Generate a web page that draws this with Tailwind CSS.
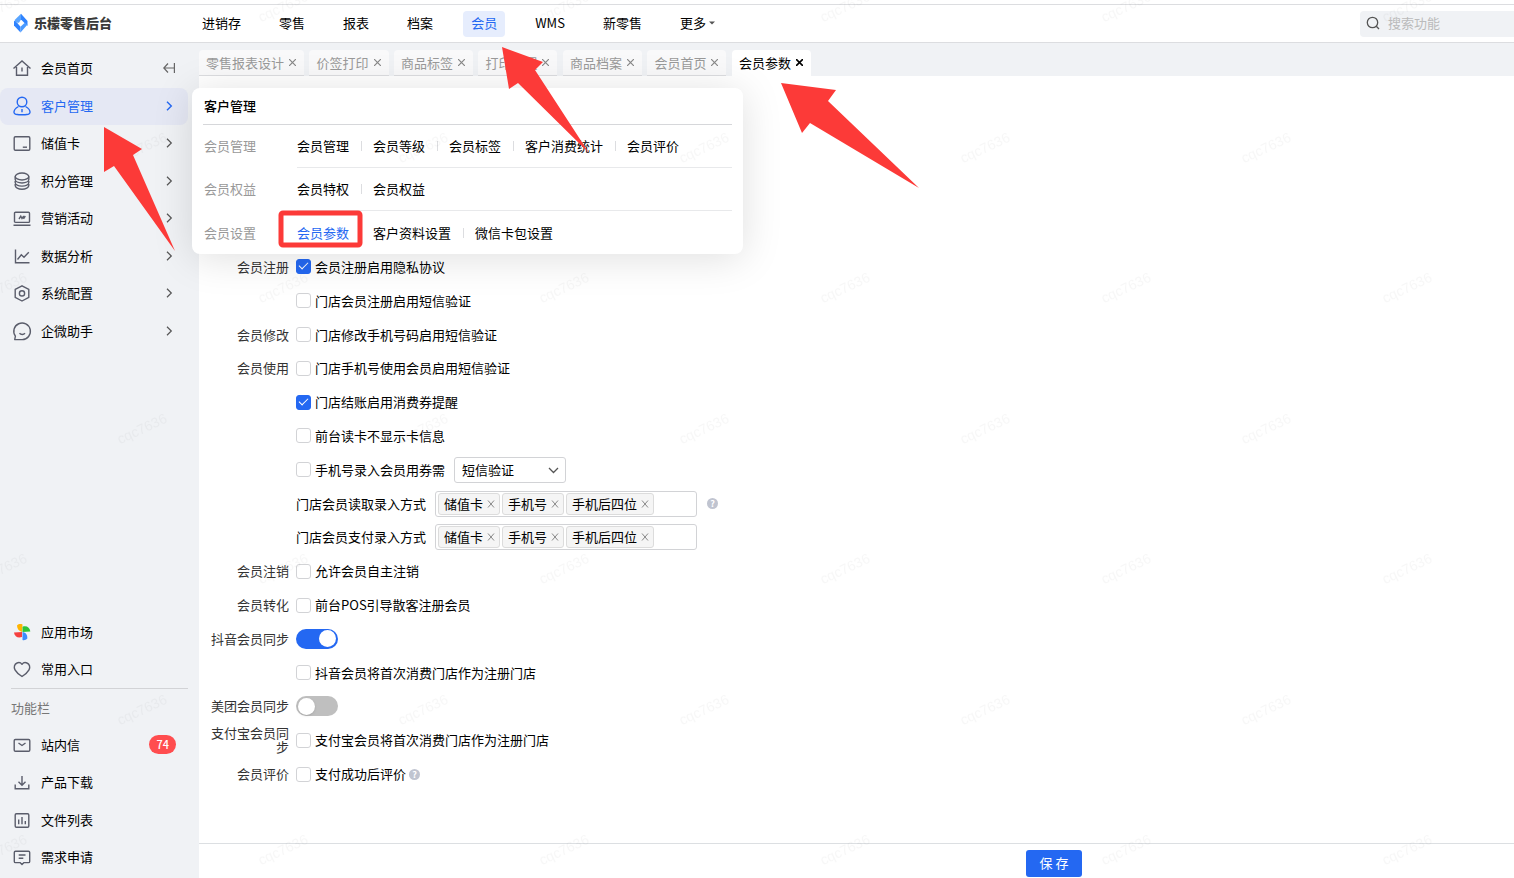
<!DOCTYPE html>
<html lang="zh-CN">
<head>
  <meta charset="UTF-8">
  <meta name="viewport" content="width=device-width, initial-scale=1.0">
  <title>乐檬零售后台 - 会员参数</title>
  <script src="https://cdn.jsdelivr.net/npm/@tailwindcss/browser@4"></script>
</head>
<body class="relative flex min-h-screen flex-col overflow-x-hidden bg-white font-['Noto_Sans_CJK_SC',sans-serif] text-[13px] leading-5 text-black">

  <!-- Header -->
  <header class="mt-1 flex h-[39px] items-center border-y border-[#dcdde0]">
    <a href="#" class="flex w-[194px] shrink-0 items-center gap-[5px] pb-[2px] pl-3 font-black text-[#3a3a3a]">
      <svg class="h-5 w-[17px]" viewBox="0 0 17 20" fill="none">
        <path d="M9 .8 3.200 6.500 2 9.500l5 .3L9 6.500z" fill="#5aa5ff"/>
        <path d="M9 .8 15.500 8v5L12.500 10 9 6.500z" fill="#2f83ff"/>
        <path d="M2 7.800v4.700L8.500 19.500v-5.700L5.300 10z" fill="#2f83ff"/>
        <path d="M15.500 11.500 8.500 19.500v-5.700l4-3.800z" fill="#4a9aff"/>
      </svg>
      <span>乐檬零售后台</span>
    </a>
    <nav class="flex w-[529px] shrink-0 items-center justify-between">
      <a href="#" class="rounded px-2 pt-[2px] pb-1">进销存</a>
      <a href="#" class="rounded px-2 pt-[2px] pb-1">零售</a>
      <a href="#" class="rounded px-2 pt-[2px] pb-1">报表</a>
      <a href="#" class="rounded px-2 pt-[2px] pb-1">档案</a>
      <a href="#" class="rounded bg-[#e6edfd] px-2 pt-[2px] pb-1 text-[#2468f2]">会员</a>
      <a href="#" class="rounded px-2 pt-[2px] pb-1">WMS</a>
      <a href="#" class="rounded px-2 pt-[2px] pb-1">新零售</a>
      <a href="#" class="flex items-center gap-[3px] rounded px-2 pt-[2px] pb-1">更多
        <svg class="h-1 w-[6px]" viewBox="0 0 6 4"><path d="M0 .5h6L3 3.500z" fill="#555"/></svg>
      </a>
    </nav>
    <label class="ml-auto flex h-[26px] w-[154px] items-center gap-2 rounded-l bg-[#f0f2f5] pb-[2px] pl-[6px]">
      <svg class="h-[14px] w-[14px] shrink-0" viewBox="0 0 14 14" fill="none" stroke="#555" stroke-width="1.300"><circle cx="6.500" cy="6.500" r="5.200"/><path d="m10.300 10.300 2.700 2.700"/></svg>
      <input type="text" aria-label="搜索功能" placeholder="搜索功能" class="w-full min-w-0 bg-transparent outline-none placeholder:text-[#bbb]">
    </label>
  </header>

  <div class="flex grow">
    <!-- Sidebar -->
    <aside class="flex w-[199px] shrink-0 flex-col justify-between bg-[#f0f2f5] pt-[7px] pb-[2px]">
      <nav class="grid min-h-[300px] auto-rows-fr pr-[11px]">
        <div class="flex items-center pb-px pl-3">
          <a href="#" class="flex items-center gap-[9px]">
            <svg class="h-5 w-5" viewBox="0 0 20 20" fill="none" stroke="#5a5d6b" stroke-width="1.400"><path d="M1.500 10.500 10 3l8.500 7.500M4.500 9v8.300h11V9M10 9.500v4"/></svg>会员首页
          </a>
          <button type="button" aria-label="收起菜单" class="mr-[13px] ml-auto">
            <svg class="h-3 w-3" viewBox="0 0 12 12" fill="none" stroke="#666" stroke-width="1.200"><path d="M11.400 1v10M11 6H.8M5 1.500.8 6 5 10.500"/></svg>
          </button>
        </div>
        <a href="#" class="flex items-center gap-[9px] rounded-lg bg-[#e5e8f4] pr-[14px] pb-px pl-3 text-[#2468f2]">
          <svg class="h-5 w-5" viewBox="0 0 20 20" fill="none" stroke="#2468f2" stroke-width="1.400"><circle cx="10" cy="6" r="4.800"/><path d="M6.500 10.500C3 12.500 1.800 14.800 2 16.500c.1 1 .8 1.500 1.800 1.700 4 .7 8.400.7 12.400 0 1-.2 1.700-.7 1.800-1.700.2-1.700-1-4-4.500-6M10 13v3.200"/></svg>客户管理
          <svg class="ml-auto h-[10px] w-[10px]" viewBox="0 0 10 10" fill="none" stroke="#2468f2" stroke-width="1.400"><path d="m3 .8 4.300 4.200L3 9.200"/></svg>
        </a>
        <a href="#" class="flex items-center gap-[9px] pr-[14px] pb-px pl-3">
          <svg class="h-5 w-5" viewBox="0 0 20 20" fill="none" stroke="#5a5d6b" stroke-width="1.400"><rect x="2.200" y="3.700" width="15.600" height="13.600" rx="1.200"/><path d="M10.800 14.200H15"/></svg>储值卡
          <svg class="ml-auto h-[10px] w-[10px]" viewBox="0 0 10 10" fill="none" stroke="#555" stroke-width="1.200"><path d="m3 .8 4.300 4.200L3 9.200"/></svg>
        </a>
        <a href="#" class="flex items-center gap-[9px] pr-[14px] pb-px pl-3">
          <svg class="h-5 w-5" viewBox="0 0 20 20" fill="none" stroke="#5a5d6b" stroke-width="1.400"><ellipse cx="10" cy="5.500" rx="6.800" ry="3.500"/><path d="M3.200 5.500v3c0 2 3 3.500 6.800 3.500s6.800-1.500 6.800-3.500v-3M3.200 10v1.600c0 2 3 3.500 6.800 3.500s6.800-1.500 6.800-3.500V10M3.200 13v1.500c0 2 3 3.700 6.800 3.700s6.800-1.700 6.800-3.700V13"/></svg>积分管理
          <svg class="ml-auto h-[10px] w-[10px]" viewBox="0 0 10 10" fill="none" stroke="#555" stroke-width="1.200"><path d="m3 .8 4.300 4.200L3 9.200"/></svg>
        </a>
        <a href="#" class="flex items-center gap-[9px] pr-[14px] pb-px pl-3">
          <svg class="h-5 w-5" viewBox="0 0 20 20" fill="none" stroke="#5a5d6b" stroke-width="1.400"><rect x="2.500" y="4.200" width="15" height="10.200" rx="1"/><path d="M1.500 17.300h17M7 11l1.800-2.800L10 10.500 11.800 8M11.500 10.800 13.300 8"/></svg>营销活动
          <svg class="ml-auto h-[10px] w-[10px]" viewBox="0 0 10 10" fill="none" stroke="#555" stroke-width="1.200"><path d="m3 .8 4.300 4.200L3 9.200"/></svg>
        </a>
        <a href="#" class="flex items-center gap-[9px] pr-[14px] pb-px pl-3">
          <svg class="h-5 w-5" viewBox="0 0 20 20" fill="none" stroke="#5a5d6b" stroke-width="1.400"><path d="M3.500 3.500v13.200h14M5.500 13.500l3.800-4.700 2.700 2.400 4.800-5"/></svg>数据分析
          <svg class="ml-auto h-[10px] w-[10px]" viewBox="0 0 10 10" fill="none" stroke="#555" stroke-width="1.200"><path d="m3 .8 4.300 4.200L3 9.200"/></svg>
        </a>
        <a href="#" class="flex items-center gap-[9px] pr-[14px] pb-px pl-3">
          <svg class="h-5 w-5" viewBox="0 0 20 20" fill="none" stroke="#5a5d6b" stroke-width="1.400" stroke-linejoin="round"><path d="m10 2.800 6.800 3.600v8L10 18l-6.800-3.600v-8z"/><circle cx="10" cy="10.400" r="2.600"/></svg>系统配置
          <svg class="ml-auto h-[10px] w-[10px]" viewBox="0 0 10 10" fill="none" stroke="#555" stroke-width="1.200"><path d="m3 .8 4.300 4.200L3 9.200"/></svg>
        </a>
        <a href="#" class="flex items-center gap-[9px] pr-[14px] pb-px pl-3">
          <svg class="h-5 w-5" viewBox="0 0 20 20" fill="none" stroke="#5a5d6b" stroke-width="1.400" stroke-linejoin="round"><path d="M2.700 18.600h7.500a8.300 8.300 0 1 0-6.800-3.400zM7.500 12.300c1.500 1.600 4 1.600 5.500 0"/></svg>企微助手
          <svg class="ml-auto h-[10px] w-[10px]" viewBox="0 0 10 10" fill="none" stroke="#555" stroke-width="1.200"><path d="m3 .8 4.300 4.200L3 9.200"/></svg>
        </a>
      </nav>

      <div class="pr-[11px]">
        <div class="grid min-h-[75px] auto-rows-fr">
          <a href="#" class="flex items-center gap-[9px] pl-3">
            <svg class="h-5 w-5" viewBox="0 0 20 20">
              <path d="M5 3.500C6.500 2 8.500 1.800 10.500 2.500L10 10C7 9 5 7 5 3.500z" fill="#ffb400"/>
              <path d="M10.500 4.800c4-1.500 7.300.7 7.800 4.700L10.500 10z" fill="#2fc43a"/>
              <path d="M10 10v5C6 16.500 2.500 14.500 2 10.500z" fill="#f5403f"/>
              <path d="M10.500 10c3.500.5 5 3 4.800 6.500-1.300 1.500-3 2-4.800 1.500z" fill="#3b8cff"/>
            </svg>应用市场
          </a>
          <a href="#" class="flex items-center gap-[9px] pl-3">
            <svg class="h-5 w-5" viewBox="0 0 20 20" fill="none" stroke="#5a5d6b" stroke-width="1.400" stroke-linejoin="round"><path d="M10 5.300C8.500 3.300 6.500 3.300 5 4 2.500 5 1.500 8 3 10.800 4.500 13.500 7 15.500 10 17.500c3-2 5.500-4 7-6.700 1.500-2.800.5-5.800-2-6.800-1.500-.7-3.500-.7-5 1.300z"/></svg>常用入口
          </a>
        </div>
        <div class="ml-[11px] border-t border-[#d2d3d6] pt-[9px] pb-2 text-[#777]">功能栏</div>
        <div class="grid min-h-[150px] auto-rows-fr">
          <a href="#" class="flex items-center gap-[9px] pr-3 pl-3">
            <svg class="h-5 w-5" viewBox="0 0 20 20" fill="none" stroke="#5a5d6b" stroke-width="1.400"><rect x="2.200" y="4.500" width="15.600" height="11.800" rx="1.200"/><path d="m6.500 8 3.500 2.500L13.500 8"/></svg>站内信
            <span class="ml-auto rounded-full bg-[#ff4d4f] px-[7px] text-[11px] leading-[19px] font-medium text-white">74</span>
          </a>
          <a href="#" class="flex items-center gap-[9px] pl-3">
            <svg class="h-5 w-5" viewBox="0 0 20 20" fill="none" stroke="#5a5d6b" stroke-width="1.400"><path d="M10 4v9M6.500 9.800 10 13.200l3.500-3.400M3.200 12.500v4.200h13.600v-4.200"/></svg>产品下载
          </a>
          <a href="#" class="flex items-center gap-[9px] pl-3">
            <svg class="h-5 w-5" viewBox="0 0 20 20" fill="none" stroke="#5a5d6b" stroke-width="1.400"><rect x="3.200" y="3.700" width="13.600" height="13.600" rx="1.200"/><path d="M6.700 9.500v4.800M10 7v7.300M13.300 11v3.300"/></svg>文件列表
          </a>
          <a href="#" class="flex items-center gap-[9px] pl-3">
            <svg class="h-5 w-5" viewBox="0 0 20 20" fill="none" stroke="#5a5d6b" stroke-width="1.400" stroke-linejoin="round"><path d="M3.500 4.200h13a1.200 1.200 0 0 1 1.200 1.200v9a1.200 1.200 0 0 1-1.200 1.200H12l-2 2-2-2H3.500a1.200 1.200 0 0 1-1.200-1.200v-9a1.200 1.200 0 0 1 1.200-1.200zM6.700 8h6.800M6.700 11.300h4.600"/></svg>需求申请
          </a>
        </div>
      </div>
    </aside>

    <main class="flex min-w-0 grow flex-col">
      <!-- Open tabs -->
      <div class="bg-[#f0f2f5] pt-[7px]">
        <div class="flex h-[26px] w-[612px] justify-between text-[#999]">
          <div class="flex items-center gap-[5px] rounded-t border-b border-[#dcdde0] bg-[#f9f9fa] pr-2 pl-[7px]">零售报表设计<button type="button" aria-label="关闭"><svg class="h-[7px] w-[7px]" viewBox="0 0 7 7" stroke="#888" stroke-width="1.200"><path d="m0 0 7 7M7 0 0 7"/></svg></button></div>
          <div class="flex items-center gap-[5px] rounded-t border-b border-[#dcdde0] bg-[#f9f9fa] pr-2 pl-[7px]">价签打印<button type="button" aria-label="关闭"><svg class="h-[7px] w-[7px]" viewBox="0 0 7 7" stroke="#888" stroke-width="1.200"><path d="m0 0 7 7M7 0 0 7"/></svg></button></div>
          <div class="flex items-center gap-[5px] rounded-t border-b border-[#dcdde0] bg-[#f9f9fa] pr-2 pl-[7px]">商品标签<button type="button" aria-label="关闭"><svg class="h-[7px] w-[7px]" viewBox="0 0 7 7" stroke="#888" stroke-width="1.200"><path d="m0 0 7 7M7 0 0 7"/></svg></button></div>
          <div class="flex items-center gap-[5px] rounded-t border-b border-[#dcdde0] bg-[#f9f9fa] pr-2 pl-[7px]">打印设置<button type="button" aria-label="关闭"><svg class="h-[7px] w-[7px]" viewBox="0 0 7 7" stroke="#888" stroke-width="1.200"><path d="m0 0 7 7M7 0 0 7"/></svg></button></div>
          <div class="flex items-center gap-[5px] rounded-t border-b border-[#dcdde0] bg-[#f9f9fa] pr-2 pl-[7px]">商品档案<button type="button" aria-label="关闭"><svg class="h-[7px] w-[7px]" viewBox="0 0 7 7" stroke="#888" stroke-width="1.200"><path d="m0 0 7 7M7 0 0 7"/></svg></button></div>
          <div class="flex items-center gap-[5px] rounded-t border-b border-[#dcdde0] bg-[#f9f9fa] pr-2 pl-[7px]">会员首页<button type="button" aria-label="关闭"><svg class="h-[7px] w-[7px]" viewBox="0 0 7 7" stroke="#888" stroke-width="1.200"><path d="m0 0 7 7M7 0 0 7"/></svg></button></div>
          <div class="flex items-center gap-[5px] rounded-t border-b border-white bg-white pr-2 pl-[7px] text-black">会员参数<button type="button" aria-label="关闭"><svg class="h-[7px] w-[7px]" viewBox="0 0 7 7" stroke="#000" stroke-width="1.600"><path d="m0 0 7 7M7 0 0 7"/></svg></button></div>
        </div>
      </div>

      <!-- Settings form -->
      <form class="flex grow flex-col">
        <div class="grid min-h-[715px] auto-rows-fr pt-[174px] pl-3">
          <div class="flex items-center gap-[7px]">
            <span class="w-[78px] text-right text-[#333]">会员注册</span>
            <label class="flex items-center gap-1"><input type="checkbox" checked class="flex h-[15px] w-[15px] appearance-none justify-center rounded-[3px] border border-[#d2d3d6] before:h-[9px] before:w-[5px] before:rotate-45 before:border-r before:border-b before:border-white checked:border-[#2468f2] checked:bg-[#2468f2]">会员注册启用隐私协议</label>
          </div>
          <div class="flex items-center gap-[7px]">
            <span class="w-[78px]"></span>
            <label class="flex items-center gap-1"><input type="checkbox" class="flex h-[15px] w-[15px] appearance-none justify-center rounded-[3px] border border-[#d2d3d6] checked:bg-[#2468f2]">门店会员注册启用短信验证</label>
          </div>
          <div class="flex items-center gap-[7px]">
            <span class="w-[78px] text-right text-[#333]">会员修改</span>
            <label class="flex items-center gap-1"><input type="checkbox" class="flex h-[15px] w-[15px] appearance-none justify-center rounded-[3px] border border-[#d2d3d6] checked:bg-[#2468f2]">门店修改手机号码启用短信验证</label>
          </div>
          <div class="flex items-center gap-[7px]">
            <span class="w-[78px] text-right text-[#333]">会员使用</span>
            <label class="flex items-center gap-1"><input type="checkbox" class="flex h-[15px] w-[15px] appearance-none justify-center rounded-[3px] border border-[#d2d3d6] checked:bg-[#2468f2]">门店手机号使用会员启用短信验证</label>
          </div>
          <div class="flex items-center gap-[7px]">
            <span class="w-[78px]"></span>
            <label class="flex items-center gap-1"><input type="checkbox" checked class="flex h-[15px] w-[15px] appearance-none justify-center rounded-[3px] border border-[#d2d3d6] before:h-[9px] before:w-[5px] before:rotate-45 before:border-r before:border-b before:border-white checked:border-[#2468f2] checked:bg-[#2468f2]">门店结账启用消费券提醒</label>
          </div>
          <div class="flex items-center gap-[7px]">
            <span class="w-[78px]"></span>
            <label class="flex items-center gap-1"><input type="checkbox" class="flex h-[15px] w-[15px] appearance-none justify-center rounded-[3px] border border-[#d2d3d6] checked:bg-[#2468f2]">前台读卡不显示卡信息</label>
          </div>
          <div class="flex items-center gap-[7px]">
            <span class="w-[78px]"></span>
            <label class="flex items-center gap-1"><input type="checkbox" class="flex h-[15px] w-[15px] appearance-none justify-center rounded-[3px] border border-[#d2d3d6] checked:bg-[#2468f2]">手机号录入会员用券需</label>
            <div class="relative ml-[2px]">
              <select aria-label="验证方式" class="h-[26px] w-28 appearance-none rounded-[3px] border border-[#d2d3d6] bg-white pl-[7px]">
                <option>短信验证</option>
              </select>
              <svg class="pointer-events-none absolute top-[10px] right-[7px] h-[7px] w-[11px]" viewBox="0 0 11 7" fill="none" stroke="#555" stroke-width="1.300"><path d="m1 1 4.500 4.500L10 1"/></svg>
            </div>
          </div>
          <div class="flex items-center gap-[7px]">
            <span class="w-[78px]"></span>
            <label for="read-mode">门店会员读取录入方式</label>
            <div class="ml-[2px] flex h-[26px] w-[262px] items-center gap-[2px] rounded-[3px] border border-[#d2d3d6] px-[2px]">
              <span class="flex h-[22px] shrink-0 items-center gap-1 rounded-[3px] border border-[#dcdcdc] bg-[#f5f5f5] pr-1 pl-[5px]">储值卡<svg class="h-2 w-2" viewBox="0 0 8 8" stroke="#888"><path d="m1 .5 6 7m0-7-6 7"/></svg></span>
              <span class="flex h-[22px] shrink-0 items-center gap-1 rounded-[3px] border border-[#dcdcdc] bg-[#f5f5f5] pr-1 pl-[5px]">手机号<svg class="h-2 w-2" viewBox="0 0 8 8" stroke="#888"><path d="m1 .5 6 7m0-7-6 7"/></svg></span>
              <span class="flex h-[22px] shrink-0 items-center gap-1 rounded-[3px] border border-[#dcdcdc] bg-[#f5f5f5] pr-1 pl-[5px]">手机后四位<svg class="h-2 w-2" viewBox="0 0 8 8" stroke="#888"><path d="m1 .5 6 7m0-7-6 7"/></svg></span>
              <input id="read-mode" type="text" class="w-full min-w-0 outline-none">
            </div>
            <span class="ml-[3px] flex h-[11px] w-[11px] items-center justify-center rounded-full bg-[#c0c4d0] text-[9px] leading-none font-bold text-white">?</span>
          </div>
          <div class="flex items-center gap-[7px]">
            <span class="w-[78px]"></span>
            <label for="pay-mode">门店会员支付录入方式</label>
            <div class="ml-[2px] flex h-[26px] w-[262px] items-center gap-[2px] rounded-[3px] border border-[#d2d3d6] px-[2px]">
              <span class="flex h-[22px] shrink-0 items-center gap-1 rounded-[3px] border border-[#dcdcdc] bg-[#f5f5f5] pr-1 pl-[5px]">储值卡<svg class="h-2 w-2" viewBox="0 0 8 8" stroke="#888"><path d="m1 .5 6 7m0-7-6 7"/></svg></span>
              <span class="flex h-[22px] shrink-0 items-center gap-1 rounded-[3px] border border-[#dcdcdc] bg-[#f5f5f5] pr-1 pl-[5px]">手机号<svg class="h-2 w-2" viewBox="0 0 8 8" stroke="#888"><path d="m1 .5 6 7m0-7-6 7"/></svg></span>
              <span class="flex h-[22px] shrink-0 items-center gap-1 rounded-[3px] border border-[#dcdcdc] bg-[#f5f5f5] pr-1 pl-[5px]">手机后四位<svg class="h-2 w-2" viewBox="0 0 8 8" stroke="#888"><path d="m1 .5 6 7m0-7-6 7"/></svg></span>
              <input id="pay-mode" type="text" class="w-full min-w-0 outline-none">
            </div>
          </div>
          <div class="flex items-center gap-[7px]">
            <span class="w-[78px] text-right text-[#333]">会员注销</span>
            <label class="flex items-center gap-1"><input type="checkbox" class="flex h-[15px] w-[15px] appearance-none justify-center rounded-[3px] border border-[#d2d3d6] checked:bg-[#2468f2]">允许会员自主注销</label>
          </div>
          <div class="flex items-center gap-[7px]">
            <span class="w-[78px] text-right text-[#333]">会员转化</span>
            <label class="flex items-center gap-1"><input type="checkbox" class="flex h-[15px] w-[15px] appearance-none justify-center rounded-[3px] border border-[#d2d3d6] checked:bg-[#2468f2]">前台POS引导散客注册会员</label>
          </div>
          <div class="flex items-center gap-[7px]">
            <label for="douyin-sync" class="w-[78px] text-right text-[#333]">抖音会员同步</label>
            <input id="douyin-sync" type="checkbox" role="switch" checked class="flex h-5 w-[42px] appearance-none items-center justify-end rounded-full bg-[#2468f2] px-[2px] before:h-[17px] before:w-[17px] before:rounded-full before:bg-white">
          </div>
          <div class="flex items-center gap-[7px]">
            <span class="w-[78px]"></span>
            <label class="flex items-center gap-1"><input type="checkbox" class="flex h-[15px] w-[15px] appearance-none justify-center rounded-[3px] border border-[#d2d3d6] checked:bg-[#2468f2]">抖音会员将首次消费门店作为注册门店</label>
          </div>
          <div class="flex items-center gap-[7px]">
            <label for="meituan-sync" class="w-[78px] text-right text-[#333]">美团会员同步</label>
            <input id="meituan-sync" type="checkbox" role="switch" class="flex h-5 w-[42px] appearance-none items-center rounded-full bg-[#bfbfbf] px-[2px] before:h-[17px] before:w-[17px] before:rounded-full before:bg-white before:shadow">
          </div>
          <div class="flex items-center gap-[7px]">
            <span class="w-[78px] text-right leading-[14px] text-[#333]">支付宝会员同步</span>
            <label class="flex items-center gap-1"><input type="checkbox" class="flex h-[15px] w-[15px] appearance-none justify-center rounded-[3px] border border-[#d2d3d6] checked:bg-[#2468f2]">支付宝会员将首次消费门店作为注册门店</label>
          </div>
          <div class="flex items-center gap-[7px]">
            <span class="w-[78px] text-right text-[#333]">会员评价</span>
            <div class="flex items-center gap-[3px]">
              <label class="flex items-center gap-1"><input type="checkbox" class="flex h-[15px] w-[15px] appearance-none justify-center rounded-[3px] border border-[#d2d3d6] checked:bg-[#2468f2]">支付成功后评价</label>
              <span class="flex h-[11px] w-[11px] items-center justify-center rounded-full bg-[#c0c4d0] text-[9px] leading-none font-bold text-white">?</span>
            </div>
          </div>
        </div>

        <div class="mt-auto flex h-[35px] border-t border-[#dcdfe2] pt-[6px] pl-[827px]">
          <button type="submit" class="h-[27px] w-14 rounded-[3px] bg-[#2468f2] pb-[2px] text-white">保 存</button>
        </div>
      </form>
    </main>
  </div>

  <!-- Flyout menu of 客户管理 -->
  <section class="absolute top-[88px] left-[192px] w-[551px] rounded-lg bg-white pr-[11px] pb-[11px] pl-[11px] shadow-[0_4px_40px_rgba(0,0,0,0.13)]">
    <h2 class="border-b border-[#d6d7da] pt-2 pb-2 pl-px font-medium">客户管理</h2>
    <div class="flex pl-px">
      <span class="w-[93px] pt-[11px] text-[#999]">会员管理</span>
      <div class="flex grow items-center border-b border-[#e8e9eb] py-[11px]">
        <a href="#">会员管理</a><span class="mr-[11px] ml-3 h-[10px] w-px bg-[#dcdde0]"></span>
        <a href="#">会员等级</a><span class="mr-[11px] ml-3 h-[10px] w-px bg-[#dcdde0]"></span>
        <a href="#">会员标签</a><span class="mr-[11px] ml-3 h-[10px] w-px bg-[#dcdde0]"></span>
        <a href="#">客户消费统计</a><span class="mr-[11px] ml-3 h-[10px] w-px bg-[#dcdde0]"></span>
        <a href="#">会员评价</a>
      </div>
    </div>
    <div class="flex pl-px">
      <span class="w-[93px] pt-[11px] text-[#999]">会员权益</span>
      <div class="flex grow items-center border-b border-[#e8e9eb] py-[11px]">
        <a href="#">会员特权</a><span class="mr-[11px] ml-3 h-[10px] w-px bg-[#dcdde0]"></span>
        <a href="#">会员权益</a>
      </div>
    </div>
    <div class="flex pl-px">
      <span class="w-[93px] pt-3 text-[#999]">会员设置</span>
      <div class="flex grow items-center pt-3">
        <a href="#" class="text-[#2468f2]">会员参数</a><span class="mr-[11px] ml-3 h-[10px] w-px"></span>
        <a href="#">客户资料设置</a><span class="mr-[11px] ml-3 h-[10px] w-px bg-[#dcdde0]"></span>
        <a href="#">微信卡包设置</a>
      </div>
    </div>
  </section>

  <!-- Watermark and guide marks -->
  <svg class="pointer-events-none absolute inset-0 h-full w-full" font-family="Liberation Sans, sans-serif" font-size="14">
    <defs>
      <pattern id="watermark" width="281" height="281" patternUnits="userSpaceOnUse" x="2" y="7">
        <g fill="#000" fill-opacity=".03" text-anchor="middle">
          <text transform="translate(142 145) rotate(-25)">cqc7636</text>
          <text transform="translate(2 4) rotate(-25)">cqc7636</text>
          <text transform="translate(283 4) rotate(-25)">cqc7636</text>
          <text transform="translate(2 285) rotate(-25)">cqc7636</text>
          <text transform="translate(283 285) rotate(-25)">cqc7636</text>
        </g>
      </pattern>
    </defs>
    <rect width="100%" height="100%" fill="url(#watermark)"/>
    <g fill="#fc3a38">
      <path d="m104 127 38 22-9 6 42 96-61-85-10 6z"/>
      <path d="m502 47 41 15-8 8 54 83-71-70-9 6z"/>
      <path d="m781 83 55 7-8 11 91 87-109-65-8 10z"/>
    </g>
    <rect x="281" y="213" width="79" height="32" rx="2" fill="none" stroke="#fc3a38" stroke-width="5"/>
  </svg>
</body>
</html>
